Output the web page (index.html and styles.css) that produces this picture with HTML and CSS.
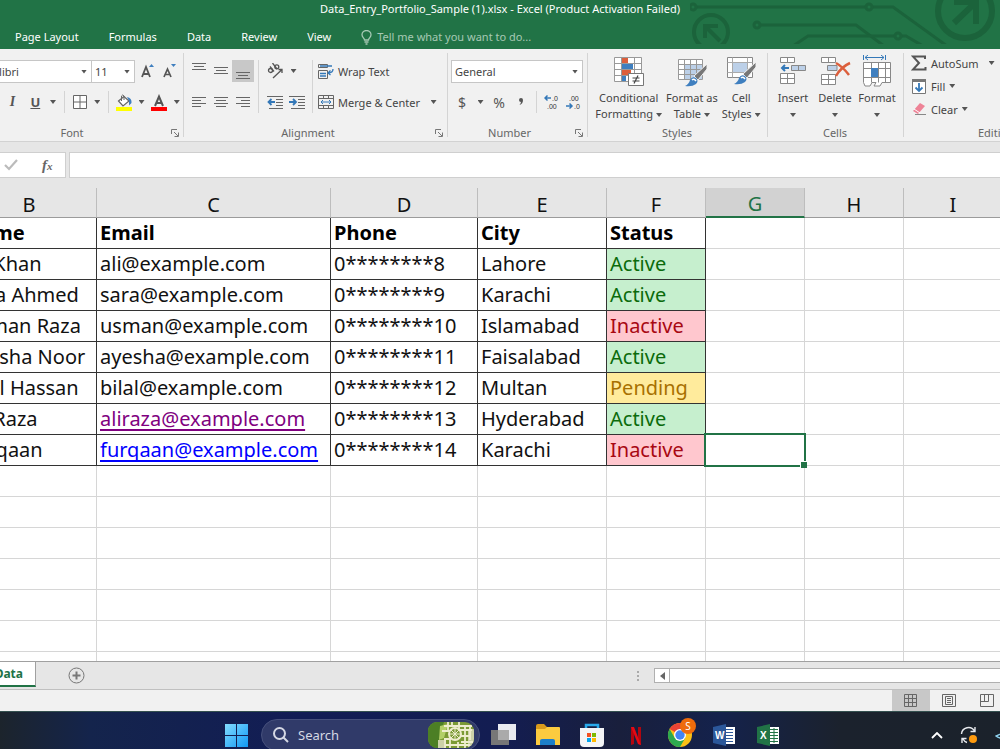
FILE: index.html
```html
<!DOCTYPE html>
<html lang="en">
<head>
    <meta charset="UTF-8">
    <meta name="viewport" content="width=device-width, initial-scale=1.0">
    <title>Data_Entry_Portfolio_Sample (1).xlsx - Excel</title>
    <link rel="stylesheet" href="styles.css">
</head>
<body>
    <header class="titlebar">
        <svg class="circuit" width="310" height="44" viewBox="0 0 310 44" fill="none" stroke="#1b633b" stroke-width="3">
            <path d="M6 7H176M183 7H203L257 46"/>
            <circle cx="3" cy="7" r="3"/><circle cx="179" cy="7" r="3"/>
            <circle cx="67" cy="25" r="3"/><path d="M71 25H166L194 46"/>
            <path d="M103 46L118 36H204M211 36H216L233 46"/><circle cx="208" cy="36" r="3"/>
            <circle cx="21" cy="32" r="17" stroke-width="4"/>
            <path d="M15 38V26H28M15 26L30 41" stroke-width="4"/>
            <circle cx="275" cy="11" r="27" stroke-width="6"/>
            <path d="M264 2H286V24M286 2L264 23" stroke-width="6"/>
        </svg>
        <h1>Data_Entry_Portfolio_Sample (1).xlsx - Excel (Product Activation Failed)</h1>
        <nav class="tabs">
            <a href="#">Page Layout</a>
            <a href="#">Formulas</a>
            <a href="#">Data</a>
            <a href="#">Review</a>
            <a href="#">View</a>
            <a href="#" class="tell">
                <svg width="11" height="15" viewBox="0 0 11 15" fill="none" stroke="#a6c9b4" stroke-width="1.3"><path d="M3.5 10C3.5 8 1 7.500 1 4.800A4.500 4.300 0 0 1 10 4.800C10 7.500 7.500 8 7.500 10ZM3.500 12H7.500M4.500 14H6.500"/></svg>
                Tell me what you want to do...
            </a>
        </nav>
    </header>

    <section class="ribbon">
        <!-- Font -->
        <div class="group group-font">
            <div class="rows">
                <div class="row">
                    <label class="combo combo-font"><select aria-label="Font"><option>Calibri</option></select></label>
                    <label class="combo combo-size"><select aria-label="Font size"><option>11</option></select></label>
                    <button class="btn" aria-label="Increase font size">
                        <svg width="16" height="16" viewBox="0 0 16 16"><path d="M2 14L6 4L10 14M3.500 11H8.500" fill="none" stroke="#555" stroke-width="1.800"/><path d="M9 4L11.500 1L14 4Z" fill="#3f7fbf"/></svg>
                    </button>
                    <button class="btn" aria-label="Decrease font size">
                        <svg width="16" height="16" viewBox="0 0 16 16"><path d="M2 14L5.500 6L9 14M3.300 11.500H7.700" fill="none" stroke="#555" stroke-width="1.700"/><path d="M9 1L11.500 4L14 1Z" fill="#3f7fbf"/></svg>
                    </button>
                </div>
                <div class="row">
                    <button class="btn glyph italic" aria-label="Italic">I</button>
                    <button class="btn glyph under" aria-label="Underline">U</button>
                    <button class="btn drop" aria-label="Underline style"><i class="caret"></i></button>
                    <span class="sep"></span>
                    <button class="btn" aria-label="Borders">
                        <svg width="14" height="14" viewBox="0 0 14 14" fill="#fff" stroke="#666"><path d="M.5.5H13.500V13.500H.5ZM7 .5V13.500M.5 7H13.500"/></svg>
                    </button>
                    <button class="btn drop" aria-label="Border style"><i class="caret"></i></button>
                    <span class="sep"></span>
                    <button class="btn" aria-label="Fill color">
                        <svg width="16" height="17" viewBox="0 0 16 17"><path d="M2.500 7L8 2.500L13 7L7 12Z" fill="#fff" stroke="#666" stroke-width="1.200"/><path d="M5.500 7V2Q6.500 0 8 2V6" fill="none" stroke="#666"/><path d="M11 3Q16 4 15.500 9L13 11.500V7Z" fill="#3f7fbf"/><path d="M0 13H16V17H0Z" fill="#ff0"/></svg>
                    </button>
                    <button class="btn drop" aria-label="Fill colors"><i class="caret"></i></button>
                    <button class="btn" aria-label="Font color">
                        <svg width="16" height="17" viewBox="0 0 16 17"><path d="M4 12L8 2.500L12 12M5.500 9H10.500" fill="none" stroke="#555" stroke-width="2"/><path d="M0 13H16V17H0Z" fill="#f00"/></svg>
                    </button>
                    <button class="btn drop" aria-label="Font colors"><i class="caret"></i></button>
                </div>
            </div>
            <h2>Font</h2>
            <svg class="launch" width="8" height="8" viewBox="0 0 8 8" fill="none" stroke="#777"><path d="M.5 5V.5H6M3 3L7 7M7.500 3.500V7.500H3.500"/></svg>
        </div>

        <!-- Alignment -->
        <div class="group group-align">
            <div class="align-grid">
                <div class="rows">
                    <div class="row">
                        <button class="btn" aria-label="Top align"><svg width="14" height="18" viewBox="0 0 14 18" stroke="#666"><path d="M0 1.500H14M2 4.500H12M0 7.500H14"/></svg></button>
                        <button class="btn" aria-label="Middle align"><svg width="14" height="18" viewBox="0 0 14 18" stroke="#666"><path d="M0 5.500H14M2 8.500H12M0 11.500H14"/></svg></button>
                        <button class="btn on" aria-label="Bottom align"><svg width="14" height="18" viewBox="0 0 14 18" stroke="#666"><path d="M0 10.500H14M2 13.500H12M0 16.500H14"/></svg></button>
                    </div>
                    <div class="row">
                        <button class="btn" aria-label="Align left"><svg width="14" height="12" viewBox="0 0 14 12" stroke="#666"><path d="M0 1.500H14M0 4.500H9M0 7.500H14M0 10.500H9"/></svg></button>
                        <button class="btn" aria-label="Center"><svg width="14" height="12" viewBox="0 0 14 12" stroke="#666"><path d="M0 1.500H14M2 4.500H12M0 7.500H14M2 10.500H12"/></svg></button>
                        <button class="btn" aria-label="Align right"><svg width="14" height="12" viewBox="0 0 14 12" stroke="#666"><path d="M0 1.500H14M5 4.500H14M0 7.500H14M5 10.500H14"/></svg></button>
                    </div>
                </div>
                <div class="rows ruled">
                    <div class="row">
                        <button class="btn" aria-label="Orientation">
                            <svg width="16" height="16" viewBox="0 0 16 16" fill="none" stroke="#555" stroke-width="1.300"><circle cx="3.500" cy="7.500" r="2"/><path d="M3 3.500L7 8.500"/><path d="M5.500 0L10 6"/><circle cx="9.800" cy="3.800" r="2"/><path d="M6 15L15 6.500M11.500 6.500H15V10"/></svg>
                        </button>
                        <button class="btn drop" aria-label="Orientation options"><i class="caret"></i></button>
                    </div>
                    <div class="row">
                        <button class="btn" aria-label="Decrease indent">
                            <svg width="16" height="14" viewBox="0 0 16 14" stroke="#666"><path d="M0 1.500H16M9 4.500H16M9 7.500H16M9 10.500H16M2 13.500H16"/><path d="M8 7H1.500M4.500 4L1.500 7L4.500 10" fill="none" stroke="#3478b8" stroke-width="1.800"/></svg>
                        </button>
                        <button class="btn" aria-label="Increase indent">
                            <svg width="16" height="14" viewBox="0 0 16 14" stroke="#666"><path d="M0 1.500H16M9 4.500H16M9 7.500H16M9 10.500H16M2 13.500H16"/><path d="M0 7H7M4 4L7 7L4 10" fill="none" stroke="#3478b8" stroke-width="1.800"/></svg>
                        </button>
                    </div>
                </div>
                <div class="rows ruled">
                    <div class="row">
                        <button class="btn text">
                            <svg width="16" height="16" viewBox="0 0 16 16" fill="none" stroke="#666"><path d="M.5 1.500H9.500V4.500H.5ZM.5 7.500H9.500V15.500H.5Z"/><path d="M2 10.500H8M2 13H8M2 3H14M15 6Q15 10 10 10M12.500 7.500L10 10L12.500 12" stroke="#3478b8" stroke-width="1.300"/></svg>
                            Wrap Text
                        </button>
                    </div>
                    <div class="row">
                        <button class="btn text">
                            <svg width="16" height="16" viewBox="0 0 16 16" fill="none" stroke="#666"><path d="M.5 1.500H15.500V14.500H.5ZM.5 4.500H15.500M.5 11.500H15.500M5.500 1.500V4.500M10.500 1.500V4.500M5.500 11.500V14.500M10.500 11.500V14.500"/><path d="M3 8H13M5 6L3 8L5 10M11 6L13 8L11 10" stroke="#3478b8"/></svg>
                            Merge &amp; Center
                        </button>
                        <button class="btn drop far" aria-label="Merge options"><i class="caret"></i></button>
                    </div>
                </div>
            </div>
            <h2>Alignment</h2>
            <svg class="launch" width="8" height="8" viewBox="0 0 8 8" fill="none" stroke="#777"><path d="M.5 5V.5H6M3 3L7 7M7.500 3.500V7.500H3.500"/></svg>
        </div>

        <!-- Number -->
        <div class="group group-number">
            <div class="rows">
                <div class="row">
                    <label class="combo combo-number"><select aria-label="Number format"><option>General</option></select></label>
                </div>
                <div class="row">
                    <button class="btn glyph" aria-label="Accounting format">$</button>
                    <button class="btn drop" aria-label="Currency"><i class="caret"></i></button>
                    <button class="btn glyph" aria-label="Percent">%</button>
                    <button class="btn" aria-label="Comma style"><svg width="6" height="8" viewBox="0 0 6 8"><path d="M1 2A2 2 0 0 1 5 2Q5 6 1.500 7Q3 5 3 4A2 2 0 0 1 1 2Z" fill="#555"/></svg></button>
                    <span class="sep"></span>
                    <button class="btn decimals" aria-label="Increase decimal">
                        <svg width="16" height="16" viewBox="0 0 16 16"><path d="M7 4H1M3.500 1.500L1 4L3.500 6.500" fill="none" stroke="#3478b8" stroke-width="1.500"/><text x="8" y="7">.0</text><text x="3" y="15">.00</text></svg>
                    </button>
                    <button class="btn decimals" aria-label="Decrease decimal">
                        <svg width="16" height="16" viewBox="0 0 16 16"><path d="M0 12H6M3.500 9.500L6 12L3.500 14.500" fill="none" stroke="#3478b8" stroke-width="1.500"/><text x="3" y="7">.00</text><text x="8" y="15">.0</text></svg>
                    </button>
                </div>
            </div>
            <h2>Number</h2>
            <svg class="launch" width="8" height="8" viewBox="0 0 8 8" fill="none" stroke="#777"><path d="M.5 5V.5H6M3 3L7 7M7.500 3.500V7.500H3.500"/></svg>
        </div>

        <!-- Styles -->
        <div class="group group-styles">
            <div class="bigs">
                <button class="big">
                    <svg width="32" height="32" viewBox="0 0 32 32"><path d="M1.500 2.500H28.500V26.500H1.500Z" fill="#fff"/><path d="M9 2H15V8H9ZM9 14H18V20H9Z" fill="#dc5f3c"/><path d="M9 8H20V14H9ZM9 20H13V26H9Z" fill="#3f7fbf"/><path d="M1.500 2.500H28.500V26.500H1.500ZM1.500 8.500H28.500M1.500 14.500H28.500M1.500 20.500H28.500M8.500 2.500V26.500M21.500 2.500V26.500" fill="none" stroke="#999"/><path d="M15.500 18.500H30.500V30.500H15.500Z" fill="#fff" stroke="#777"/><path d="M19.500 23H26.500M19.500 26H26.500M25 20.500L21 28.500" stroke="#444" stroke-width="1.200" fill="none"/></svg>
                    <span>Conditional<br>Formatting<i class="caret"></i></span>
                </button>
                <button class="big">
                    <svg width="32" height="32" viewBox="0 0 32 32"><path d="M2.500 4.500H26.500V24.500H2.500Z" fill="#fff"/><path d="M9 10H27V24H9Z" fill="#bcd0e8"/><path d="M2.500 4.500H26.500V24.500H2.500ZM2.500 9.500H26.500M2.500 14.500H26.500M2.500 19.500H26.500M8.500 4.500V24.500M14.500 4.500V24.500M20.500 4.500V24.500" fill="none" stroke="#999"/><path d="M31 9V14L22 25L18 21Z" fill="#777" stroke="#f1f1f1"/><path d="M9 31Q13 29 14 25Q16 21 20 23Q23 26 20 29Q16 32 9 31Z" fill="#3f7fbf"/><path d="M16 25Q18 23 20 26" fill="none" stroke="#fff" stroke-width="1.500"/></svg>
                    <span>Format as<br>Table<i class="caret"></i></span>
                </button>
                <button class="big">
                    <svg width="32" height="32" viewBox="0 0 32 32"><path d="M2.500 2.500H27.500V22.500H2.500Z" fill="#fff" stroke="#888"/><path d="M2.500 7.500H27.500M2.500 17.500H27.500M7.500 2.500V22.500M22.500 2.500V22.500" stroke="#aaa"/><path d="M8 8H22V17H8Z" fill="#bcd0e8"/><path d="M31 7V12L22 23L18 19Z" fill="#777" stroke="#f1f1f1"/><path d="M9 29Q13 27 14 23Q16 19 20 21Q23 24 20 27Q16 30 9 29Z" fill="#3f7fbf"/><path d="M16 23Q18 21 20 24" fill="none" stroke="#fff" stroke-width="1.500"/></svg>
                    <span>Cell<br>Styles<i class="caret"></i></span>
                </button>
            </div>
            <h2>Styles</h2>
        </div>

        <!-- Cells -->
        <div class="group group-cells">
            <div class="bigs">
                <button class="big">
                    <svg width="32" height="32" viewBox="0 0 32 32" fill="#fff" stroke="#888"><path d="M3.500 2.500H17.500V7.500H3.500ZM10.500 2.500V7.500M3.500 18.500H17.500V28.500H3.500ZM10.500 18.500V28.500M3.500 23.500H17.500"/><path d="M14.500 10.500H28.500V15.500H14.500ZM21.500 10.500V15.500" fill="#bcd0e8"/><path d="M12 13H5M8 10L5 13L8 16" fill="none" stroke="#3478b8" stroke-width="2"/></svg>
                    <span>Insert<br><i class="caret"></i></span>
                </button>
                <button class="big">
                    <svg width="32" height="32" viewBox="0 0 32 32" fill="#fff" stroke="#888"><path d="M2.500 2.500H16.500V7.500H2.500ZM9.500 2.500V7.500M2.500 19.500H16.500V29.500H2.500ZM9.500 19.500V29.500M2.500 24.500H16.500"/><path d="M8.500 10.500H18V15.500H8.500Z" fill="#bcd0e8"/><path d="M17 8Q24 12 30 20M31 8Q22 12 17 21" fill="none" stroke="#dc5f3c" stroke-width="2.500"/></svg>
                    <span>Delete<br><i class="caret"></i></span>
                </button>
                <button class="big">
                    <svg width="32" height="32" viewBox="0 0 32 32" fill="#fff" stroke="#888"><path d="M2.500 7.500H29.500V27.500H21L19 31H13L15 27.500H11L9 31H4L2.500 27.500ZM2.500 13.500H29.500M2.500 22.500H29.500M10.500 7.500V27.500M17.500 7.500V27.500M24.500 7.500V27.500"/><path d="M10 13H17V22H10Z" fill="#3f7fbf" stroke="none"/><path d="M2.500 0V5M24.500 0V5M4 2.500H23M7 0L4 2.500L7 5M20 0L23 2.500L20 5" fill="none" stroke="#3478b8"/></svg>
                    <span>Format<br><i class="caret"></i></span>
                </button>
            </div>
            <h2>Cells</h2>
        </div>

        <!-- Editing -->
        <div class="group group-edit">
            <div class="edits">
                <button class="btn text">
                    <svg width="16" height="16" viewBox="0 0 16 16" fill="none" stroke="#555" stroke-width="2"><path d="M14 4V1.500H2L8 8L2 14.500H14.500V12"/></svg>
                    AutoSum<i class="caret wide"></i>
                </button>
                <button class="btn text">
                    <svg width="16" height="16" viewBox="0 0 16 16"><path d="M1.500 1.500H14.500V15.500H1.500Z" fill="#fff" stroke="#777"/><path d="M1 1H15V4H1Z" fill="#777"/><path d="M8 5V13M4.500 9.500L8 13L11.500 9.500" fill="none" stroke="#3478b8" stroke-width="1.800"/></svg>
                    Fill<i class="caret"></i>
                </button>
                <button class="btn text">
                    <svg width="16" height="16" viewBox="0 0 16 16"><path d="M2 10L9 2L14 5L7 13Z" fill="#ee8397"/><path d="M3 8L9 12" stroke="#fff"/><path d="M4 13.500H15" stroke="#888"/></svg>
                    Clear<i class="caret"></i>
                </button>
            </div>
            <h2>Editing</h2>
        </div>
    </section>

    <div class="formula">
        <div class="fx">
            <button aria-label="Enter"><svg width="14" height="12" viewBox="0 0 14 12" fill="none" stroke="#bbb" stroke-width="2.200"><path d="M1 6L5 10L13 1"/></svg></button>
            <button class="fn" aria-label="Insert function">f<small>x</small></button>
        </div>
        <input type="text" aria-label="Formula bar">
    </div>

    <main class="sheet">
        <table>
            <colgroup>
                <col class="b"><col class="c"><col class="d"><col class="e"><col class="f"><col class="f"><col class="f"><col>
            </colgroup>
            <thead>
                <tr><th>B</th><th>C</th><th>D</th><th>E</th><th>F</th><th class="current">G</th><th>H</th><th>I</th></tr>
            </thead>
            <tbody class="filled">
                <tr class="names"><td>Name</td><td>Email</td><td>Phone</td><td>City</td><td>Status</td><td></td><td></td><td></td></tr>
                <tr><td>Ali Khan</td><td>ali@example.com</td><td>0********8</td><td>Lahore</td><td class="active">Active</td><td></td><td></td><td></td></tr>
                <tr><td>Sara Ahmed</td><td>sara@example.com</td><td>0********9</td><td>Karachi</td><td class="active">Active</td><td></td><td></td><td></td></tr>
                <tr><td>Usman Raza</td><td>usman@example.com</td><td>0********10</td><td>Islamabad</td><td class="inactive">Inactive</td><td></td><td></td><td></td></tr>
                <tr><td>Ayesha Noor</td><td>ayesha@example.com</td><td>0********11</td><td>Faisalabad</td><td class="active">Active</td><td></td><td></td><td></td></tr>
                <tr><td>Bilal Hassan</td><td>bilal@example.com</td><td>0********12</td><td>Multan</td><td class="pending">Pending</td><td></td><td></td><td></td></tr>
                <tr><td>Ali Raza</td><td><a href="#" class="seen">aliraza@example.com</a></td><td>0********13</td><td>Hyderabad</td><td class="active">Active</td><td></td><td></td><td></td></tr>
                <tr><td>Furqaan</td><td><a href="#">furqaan@example.com</a></td><td>0********14</td><td>Karachi</td><td class="inactive">Inactive</td><td class="cursor"></td><td></td><td></td></tr>
            </tbody>
            <tbody>
                <tr><td></td><td></td><td></td><td></td><td></td><td></td><td></td><td></td></tr>
                <tr><td></td><td></td><td></td><td></td><td></td><td></td><td></td><td></td></tr>
                <tr><td></td><td></td><td></td><td></td><td></td><td></td><td></td><td></td></tr>
                <tr><td></td><td></td><td></td><td></td><td></td><td></td><td></td><td></td></tr>
                <tr><td></td><td></td><td></td><td></td><td></td><td></td><td></td><td></td></tr>
                <tr><td></td><td></td><td></td><td></td><td></td><td></td><td></td><td></td></tr>
                <tr><td></td><td></td><td></td><td></td><td></td><td></td><td></td><td></td></tr>
            </tbody>
        </table>
    </main>

    <div class="sheetbar">
        <button class="sheet-tab">Data</button>
        <button class="add" aria-label="New sheet"><svg width="17" height="17" viewBox="0 0 17 17" fill="none" stroke="#777"><circle cx="8.500" cy="8.500" r="7.500"/><path d="M8.500 4.500V12.500M4.500 8.500H12.500" stroke-width="2"/></svg></button>
        <div class="hscroll">
            <svg width="4" height="12" viewBox="0 0 4 12" fill="#aaa"><path d="M1 1H3V3H1ZM1 5H3V7H1ZM1 9H3V11H1Z"/></svg>
            <button aria-label="Scroll left"><svg width="5" height="8" viewBox="0 0 5 8"><path d="M5 0V8L0 4Z" fill="#666"/></svg></button>
            <div class="track"></div>
        </div>
    </div>

    <div class="statusbar">
        <button class="on" aria-label="Normal view"><svg width="14" height="14" viewBox="0 0 14 14" fill="none" stroke="#666"><path d="M.5.5H12.500V12.500H.5ZM4.500.5V12.500M8.500.5V12.500M.5 4.500H12.500M.5 8.500H12.500"/></svg></button>
        <button aria-label="Page layout view"><svg width="14" height="14" viewBox="0 0 14 14" fill="none" stroke="#666"><path d="M.5.5H13.500V12.500H.5ZM3.500 2.500H10.500V10.500H3.500ZM5 4.500H9M5 6.500H9M5 8.500H9"/></svg></button>
        <button aria-label="Page break view"><svg width="14" height="14" viewBox="0 0 14 14" fill="none" stroke="#666"><path d="M.5.5H13.500V12.500H.5ZM4.500.5V7.500M8.500.5V7.500H.5"/></svg></button>
    </div>

    <footer class="taskbar">
        <button class="start" aria-label="Start">
            <svg width="24" height="24" viewBox="0 0 24 24"><defs><linearGradient id="win" x1="0" y1="0" x2="1" y2="1"><stop offset="0" stop-color="#82dcff"/><stop offset="1" stop-color="#1098f5"/></linearGradient></defs><path d="M1 0H12V11H1ZM13 0H24V11H13ZM1 12H12V23H1ZM13 12H24V23H13Z" fill="url(#win)"/></svg>
        </button>
        <label class="search">
            <svg width="16" height="16" viewBox="0 0 16 16" fill="none" stroke="#d5d8e4" stroke-width="2"><circle cx="6.500" cy="6.500" r="5.500"/><path d="M10.500 10.500L15 15"/></svg>
            <input type="text" placeholder="Search">
            <svg width="46" height="26" viewBox="0 0 46 26"><defs><clipPath id="pill"><rect width="46" height="26" rx="9"/></clipPath></defs><g clip-path="url(#pill)"><path d="M0 0H46V26H0Z" fill="#7b9a34"/><path d="M0 0H16Q10 14 14 26H0Z" fill="#4c7f25"/><path d="M12 4L20 2L16 16L11 18Z" fill="#b3cf67"/><path d="M10 18H18V26H10ZM40 7H46V26H40Z" fill="#ccd1a8"/><path d="M16 4H44M14 9H22M32 8H44M16 17H23M33 14H42M33 20H45M17 23H42M20 0V9M24 0V5M31 0V8M37 3V26M42 3V18M17 17V26M22 18V26M30 20V26" stroke="#eeedce" stroke-width="1.800"/><circle cx="27" cy="12" r="6" fill="#7b9a34" stroke="#eeedce" stroke-width="2"/><path d="M23 8L31 16M31 8L23 16M27 6V18M21 12H33" stroke="#eeedce"/></g></svg>
        </label>
        <nav class="apps">
            <button aria-label="Task view"><svg width="26" height="24" viewBox="0 0 26 24"><path d="M7 1H25V17H7Z" fill="#e9ebf0"/><path d="M0 7H18V22H0Z" fill="#777"/><path d="M7 7H18V17H7Z" fill="#aaa"/></svg></button>
            <button aria-label="File Explorer"><svg width="26" height="24" viewBox="0 0 26 24"><path d="M1 3Q1 1 3 1H9L12 4H20V10H1Z" fill="#d99b1c"/><path d="M1 6H10L12 4H24Q25 4 25 5V22H1Z" fill="#fccb3f"/><path d="M5 22V18Q5 16 7 16H18Q20 16 20 18V22Z" fill="#1c7ec9"/></svg></button>
            <button aria-label="Microsoft Store"><svg width="26" height="24" viewBox="0 0 26 24"><path d="M7 7V2H19V7" fill="none" stroke="#29a9ea" stroke-width="2.500"/><path d="M1 5H25V20Q25 24 21 24H5Q1 24 1 20Z" fill="#f3f4f6"/><path d="M8 10H12V14H8Z" fill="#f25022"/><path d="M13 10H17V14H13Z" fill="#7fba00"/><path d="M8 15H12V19H8Z" fill="#00a4ef"/><path d="M13 15H17V19H13Z" fill="#ffb900"/></svg></button>
            <button aria-label="Netflix"><svg width="26" height="24" viewBox="0 0 26 24"><path d="M8 4H11V21L8 22ZM15 4H18V22L15 21Z" fill="#b1060f"/><path d="M8 4H11L18 22L15 21Z" fill="#e50914"/></svg></button>
            <button class="chrome" aria-label="Chrome"><svg width="26" height="26" viewBox="0 0 26 26"><circle cx="13" cy="13" r="12" fill="#fbc116"/><path d="M13 13L2.600 7A12 12 0 0 1 23.400 7H13Z" fill="#ea4335"/><path d="M2.600 7A12 12 0 0 0 13 25L18.200 16L13 13L7.800 16Z" fill="#2da94f"/><circle cx="13" cy="13" r="6" fill="#fff"/><circle cx="13" cy="13" r="4.700" fill="#4285f4"/></svg><b>S</b></button>
            <button aria-label="Word"><svg width="24" height="22" viewBox="0 0 24 22"><path d="M12 3H23V20H12Z" fill="#fff"/><path d="M13 5.500H21M13 8.500H21M13 11.500H21M13 14.500H21M13 17.500H21" stroke="#2b579a"/><path d="M1 3L14 0V22L1 19Z" fill="#2b579a"/><text x="3" y="15">W</text></svg></button>
            <button aria-label="Excel"><svg width="24" height="22" viewBox="0 0 24 22"><path d="M12 3H23V20H12Z" fill="#fff"/><path d="M13 5.500H22M13 8.500H22M13 11.500H22M13 14.500H22M13 17.500H22M18 4V19" stroke="#217346"/><path d="M1 3L14 0V22L1 19Z" fill="#217346"/><text x="4" y="15">X</text></svg></button>
        </nav>
        <div class="tray">
            <button aria-label="Hidden icons"><svg width="12" height="7" viewBox="0 0 12 7" fill="none" stroke="#fff" stroke-width="1.800"><path d="M1 6L6 1L11 6"/></svg></button>
            <button aria-label="Updates"><svg width="18" height="18" viewBox="0 0 18 18" fill="none" stroke="#e8eaee" stroke-width="1.400"><path d="M1.500 8A7 7 0 0 1 14.500 5M15 1V5.500H10.500M7 16.500A7 7 0 0 1 3 13M2 17V12.500H6.500"/><circle cx="13" cy="13" r="4" fill="#ff9b0f" stroke="none"/></svg></button>
            <button aria-label="Network"><svg width="16" height="12" viewBox="0 0 16 12" fill="none" stroke="#8fd4f2" stroke-width="1.400"><path d="M12 2L1 7Q4 10 12 9"/></svg></button>
        </div>
    </footer>
</body>
</html>
```
FILE: styles.css
```css
* {
    box-sizing: border-box;
}
body {
    margin: 0;
    height: 100vh;
    display: flex;
    flex-direction: column;
    overflow: hidden;
    font-family: "Noto Sans", "Open Sans", sans-serif;
    font-size: 11px;
    color: #444;
    background-color: #e6e6e6;
}
button, select, input {
    font: inherit;
    color: inherit;
    border: none;
    padding: 0;
    margin: 0;
    background: none;
}
svg {
    display: block;
    flex: none;
}
h1, h2 {
    margin: 0;
    font-size: 11px;
    font-weight: normal;
}

/* title bar */
.titlebar {
    position: relative;
    flex: none;
    height: 49px;
    background-color: #217346;
    color: #fff;
}
.titlebar h1 {
    position: relative;
    text-align: center;
    line-height: 18px;
}
.circuit {
    position: absolute;
    top: 0;
    right: 0;
}
.tabs {
    position: relative;
    display: flex;
    gap: 30px;
    padding: 8px 15px 0;
    line-height: 22px;
}
.tabs a {
    color: #fff;
    text-decoration: none;
}
.tabs .tell {
    display: flex;
    align-items: center;
    gap: 5px;
    color: #a6c9b4;
}

/* ribbon */
.ribbon {
    flex: none;
    display: flex;
    height: 93px;
    overflow: hidden;
    background-color: #f1f1f1;
    border-bottom: 1px solid #d2d2d2;
}
.group {
    position: relative;
    flex: none;
    display: flex;
    flex-direction: column;
    justify-content: space-between;
    padding-top: 11px;
}
.group::after {
    content: "";
    position: absolute;
    top: 4px;
    right: 0;
    bottom: 4px;
    width: 1px;
    background-color: #d4d4d4;
}
.group h2 {
    text-align: center;
    line-height: 17px;
    color: #666;
}
.group-font { width: 184px; }
.group-font h2 { padding-right: 40px; }
.group-align { width: 264px; padding-left: 4px; }
.group-align h2 { padding-right: 20px; }
.group-number { width: 140px; padding-left: 3px; }
.group-number h2 { padding-right: 20px; }
.group-styles { width: 180px; padding-top: 6px; }
.group-styles h2 { padding-right: 2px; }
.group-cells { width: 136px; padding: 6px 2px 0 0; }
.group-edit { width: 184px; padding-top: 3px; }
.launch {
    position: absolute;
    right: 5px;
    bottom: 4px;
}
.rows {
    display: flex;
    flex-direction: column;
    gap: 9px;
}
.row {
    display: flex;
    align-items: center;
    height: 22px;
}
.btn {
    display: flex;
    align-items: center;
    justify-content: center;
    width: 22px;
    height: 22px;
}
.btn.drop {
    width: 15px;
}
.btn.far {
    width: 27px;
}
.btn.on, .statusbar .on {
    background-color: #c8c8c8;
}
.btn.text {
    width: auto;
    gap: 4px;
    white-space: nowrap;
}
.glyph {
    font-size: 14px;
    color: #555;
}
.italic {
    width: 26px;
    font-family: "Liberation Serif", serif;
    font-style: italic;
    font-weight: bold;
}
.under {
    font-size: 13px;
    font-weight: bold;
    text-decoration: underline;
}
.caret {
    display: inline-block;
    width: 6px;
    height: 4px;
    background-color: #555;
    clip-path: polygon(0 0, 100% 0, 50% 100%);
}
.sep {
    width: 1px;
    height: 22px;
    margin: 0 4px;
    background-color: #d4d4d4;
}
.combo {
    position: relative;
    height: 23px;
    background-color: #fff;
    border: 1px solid #c6c6c6;
}
.combo::after {
    content: "";
    position: absolute;
    top: 9px;
    right: 4px;
    width: 6px;
    height: 4px;
    background-color: #555;
    clip-path: polygon(0 0, 100% 0, 50% 100%);
}
.combo select {
    appearance: none;
    width: 100%;
    height: 100%;
    padding-left: 3px;
    outline: none;
}
.combo-font { width: 110px; margin-left: -18px; }
.combo-size { width: 43px; border-left: none; margin-right: 2px; }
.combo-number { width: 132px; }
.align-grid {
    display: flex;
}
.ruled {
    margin-left: 4px;
    padding-left: 5px;
    border-left: 1px solid #d4d4d4;
}
.decimals text {
    font-family: "Liberation Sans", sans-serif;
    font-size: 7px;
    fill: #333;
}
.bigs {
    display: flex;
    justify-content: center;
}
.big {
    display: flex;
    flex-direction: column;
    align-items: center;
    gap: 3px;
    padding: 0 2px;
    line-height: 16px;
    white-space: nowrap;
}
.big .caret {
    margin-left: 3px;
    vertical-align: middle;
}
.group-cells .big {
    width: 42px;
    padding: 0;
}
.group-cells .caret {
    margin-left: 0;
}
.edits {
    display: flex;
    flex-direction: column;
    align-items: flex-start;
    gap: 1px;
    padding-left: 7px;
}
.edits .wide {
    margin-left: 6px;
}

/* formula bar */
.formula {
    flex: none;
    display: flex;
    gap: 3px;
    height: 26px;
    margin: 10px 0;
}
.fx {
    display: flex;
    align-items: center;
    width: 66px;
    padding-left: 4px;
    gap: 24px;
    background-color: #fff;
    border: 1px solid #cfcfcf;
    border-left: none;
}
.fn {
    font: italic bold 15px "Liberation Serif", serif;
    color: #666;
}
.fn small {
    font-size: 11px;
}
.formula input {
    flex: 1;
    background-color: #fff;
    border: 1px solid #cfcfcf;
    border-right: none;
}

/* sheet, scrolled so that column B is partly off the left edge */
.sheet {
    flex: 1;
    min-height: 0;
    overflow: hidden;
    background-color: #fff;
}
.sheet table {
    width: calc(100% + 41px);
    margin-left: -38px;
    table-layout: fixed;
    border-collapse: separate;
    border-spacing: 0;
    font-size: 20px;
    line-height: 30px;
    color: #111;
}
.b { width: 135px; }
.c { width: 234px; }
.d { width: 147px; }
.e { width: 129px; }
.f { width: 99px; }
th {
    height: 30px;
    padding: 3px 0 0;
    line-height: 25px;
    font-weight: normal;
    background-color: #e6e6e6;
    border-right: 1px solid #bdbdbd;
    border-bottom: 1px solid #9b9b9b;
}
th.current {
    color: #217346;
    background-color: #d2d2d2;
    border-bottom: 2px solid #217346;
}
td {
    height: 31px;
    padding: 0 3px;
    white-space: nowrap;
    border-right: 1px solid #d6d6d6;
    border-bottom: 1px solid #d6d6d6;
}
.filled td:nth-child(-n+5) {
    border-color: #333;
}
.names td {
    font-weight: bold;
    color: #000;
}
.sheet a {
    color: #00f;
    text-underline-offset: 3px;
    text-decoration-thickness: 2px;
    text-decoration-skip-ink: none;
}
.sheet a.seen {
    color: #800080;
}
.active {
    color: #0b6b0b;
    background-color: #c6efce;
}
.inactive {
    color: #a80812;
    background-color: #ffc7ce;
}
.pending {
    color: #a87000;
    background-color: #ffeb9c;
}
.cursor {
    position: relative;
}
.cursor::before {
    content: "";
    position: absolute;
    inset: -2px;
    border: 2px solid #217346;
}
.cursor::after {
    content: "";
    position: absolute;
    right: -3px;
    bottom: -3px;
    width: 6px;
    height: 6px;
    background-color: #217346;
    border: 1px solid #fff;
    border-width: 1px 0 0 1px;
}

/* sheet tabs and scroll bar */
.sheetbar {
    flex: none;
    display: flex;
    align-items: center;
    height: 29px;
    border-top: 1px solid #a0a0a0;
    border-bottom: 1px solid #c0c0c0;
}
.sheet-tab {
    align-self: flex-start;
    width: 36px;
    height: 25px;
    padding-right: 12px;
    direction: rtl;
    font-size: 12px;
    font-weight: bold;
    color: #217346;
    background-color: #fff;
    border-right: 1px solid #a0a0a0;
    border-bottom: 2px solid #217346;
}
.add {
    margin-left: 32px;
}
.hscroll {
    display: flex;
    align-items: center;
    width: 364px;
    margin-left: auto;
}
.hscroll button {
    display: flex;
    align-items: center;
    justify-content: center;
    width: 16px;
    height: 15px;
    margin-left: 14px;
    background-color: #fff;
    border: 1px solid #b0b0b0;
}
.track {
    flex: 1;
    height: 15px;
    background-color: #fff;
    border: 1px solid #b0b0b0;
    border-width: 1px 0;
}
.statusbar {
    flex: none;
    display: flex;
    justify-content: flex-end;
    height: 21px;
    margin-right: -6px;
    background-color: #f1f1f1;
}
.statusbar button {
    display: flex;
    align-items: center;
    justify-content: center;
    width: 38px;
}

/* taskbar */
.taskbar {
    flex: none;
    display: flex;
    height: 38px;
    padding: 7px 0 0 224px;
    overflow: hidden;
    border-top: 1px solid #34504f;
    background: linear-gradient(90deg, #1c242c 0, #14244c 9%, #121d55 30%, #131d52 50%, #191f3c 62%, #14224c 72%, #1b222d 84%, #1b222b 100%);
}
.start {
    padding-top: 5px;
    align-self: flex-start;
}
.search {
    flex: none;
    display: flex;
    align-items: center;
    width: 219px;
    height: 32px;
    margin: 0 2px 0 13px;
    padding: 0 5px 0 11px;
    gap: 9px;
    border-radius: 16px;
    border: 1px solid #46507c;
    background-color: #303a69;
}
.search input {
    flex: 1;
    min-width: 0;
    font-size: 13px;
}
.search input::placeholder {
    color: #d5d8e4;
}
.apps, .tray {
    display: flex;
}
.apps button {
    display: flex;
    align-items: center;
    justify-content: center;
    width: 44px;
    height: 32px;
}
.apps text {
    font-family: "Liberation Sans", sans-serif;
    font-size: 10px;
    font-weight: bold;
    fill: #fff;
}
.apps .chrome {
    position: relative;
}
.chrome b {
    position: absolute;
    top: -1px;
    right: 6px;
    width: 16px;
    height: 16px;
    border-radius: 8px;
    background-color: #ee6c0c;
    color: #fff;
    font-size: 10px;
    font-weight: normal;
    line-height: 16px;
}
.tray {
    align-items: center;
    height: 32px;
    gap: 17px;
    margin-left: auto;
    margin-right: -11px;
}
```
